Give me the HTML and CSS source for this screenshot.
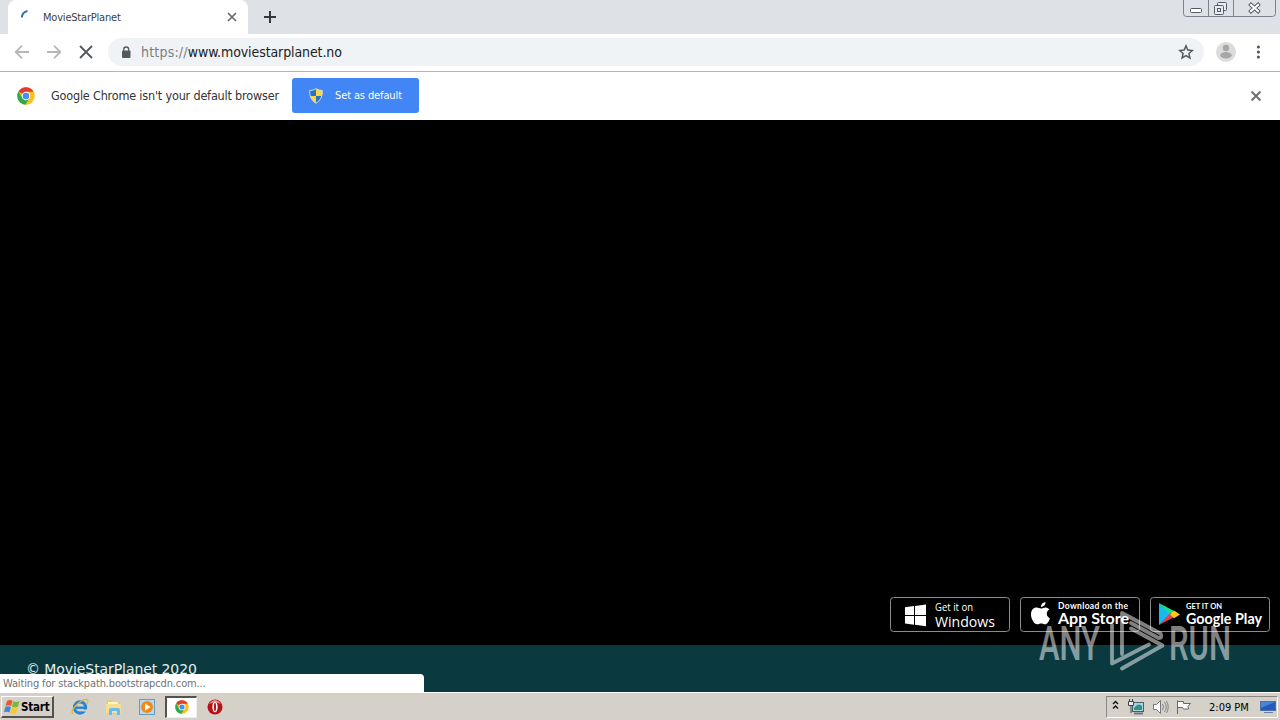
FILE: index.html
```html
<!DOCTYPE html>
<html lang="en">
<head>
  <meta charset="UTF-8">
  <title>MovieStarPlanet</title>
  <link rel="stylesheet" href="styles.css">
</head>
<body>
  <!-- shared logo -->
  <svg class="defs" width="0" height="0">
    <symbol id="chrome" viewBox="0 0 18 18">
      <circle cx="9" cy="9" r="8.7" fill="#fbc116"/>
      <path d="M9 9 1.5 4.6A8.7 8.7 0 0 1 16.6 4.8H9z" fill="#e33b2e"/>
      <path d="M1.5 4.6A8.7 8.7 0 0 0 8.3 17.7L12.6 11 9 9 5.4 11z" fill="#2da94f"/>
      <circle cx="9" cy="9" r="4.3" fill="#fff"/>
      <circle cx="9" cy="9" r="3.3" fill="#4a8af4"/>
    </symbol>
  </svg>

  <div class="tabstrip">
    <div class="tab">
      <svg class="spinner" width="16" height="16" viewBox="0 0 16 16"><path d="M1.900 8.500A7 7 0 0 1 7.500 2" fill="none" stroke="#3271c2" stroke-width="2"/></svg>
      <span class="tab-title">MovieStarPlanet</span>
      <svg width="10" height="10" viewBox="0 0 10 10"><path d="M1 1l8 8M9 1L1 9" stroke="#66696d" stroke-width="1.7"/></svg>
    </div>
    <svg class="new-tab" width="14" height="14" viewBox="0 0 14 14"><path d="M7 1v12M1 7h12" stroke="#34373b" stroke-width="2"/></svg>
    <div class="win-buttons">
      <svg width="96" height="17" viewBox="0 0 96 17">
        <path d="M.5 0V13.5Q.5 16.5 3.5 16.5H89.5Q92.5 16.5 92.5 13.5V0M25.500 0V16M50.500 0V16" fill="none" stroke="#7d828c"/>
        <rect x="7.500" y="8.500" width="11" height="4" rx="1" fill="#fff" stroke="#555a66"/>
        <g fill="#e8ebef" stroke="#555a66"><rect x="34.500" y="2.500" width="9" height="8" rx="1"/><rect x="31.500" y="5.500" width="9" height="9" rx="1"/><rect x="34.500" y="8.500" width="3" height="3"/></g>
        <path d="M66.500 3.500l10 9M76.500 3.500l-10 9" stroke="#555a66" stroke-width="4"/><path d="M67.200 4.200l8.600 7.600M75.800 4.200l-8.600 7.600" stroke="#fff" stroke-width="2.200"/>
      </svg>
    </div>
  </div>

  <div class="toolbar">
    <svg class="nav" width="16" height="16" viewBox="0 0 16 16"><path d="M15 8H2M8 1.700 1.700 8 8 14.300" fill="none" stroke="#b5b7ba" stroke-width="1.800"/></svg>
    <svg class="nav" width="16" height="16" viewBox="0 0 16 16"><path d="M1 8h13M8 1.700 14.300 8 8 14.300" fill="none" stroke="#b5b7ba" stroke-width="1.800"/></svg>
    <svg class="nav" width="16" height="16" viewBox="0 0 16 16"><path d="M2 2l12 12M14 2L2 14" stroke="#55585c" stroke-width="1.800"/></svg>
    <div class="omnibox">
      <svg width="10" height="13" viewBox="0 0 10 13"><rect x="1" y="4.500" width="8.500" height="7.500" rx="1" fill="#55595e"/><path d="M2.700 5V3.500a2.500 2.500 0 0 1 5 0V5" fill="none" stroke="#55595e" stroke-width="1.300"/></svg>
      <span class="url"><span class="scheme">https://</span>www.moviestarplanet.no</span>
      <svg class="star" width="16" height="16" viewBox="0 0 16 16"><path d="M8 1.900l1.800 4.200 4.500.4-3.400 3 1 4.400L8 11.600l-3.900 2.300 1-4.400-3.400-3 4.500-.4z" fill="none" stroke="#55595e" stroke-width="1.500"/></svg>
    </div>
    <svg class="avatar" width="20" height="20" viewBox="0 0 20 20"><circle cx="10" cy="10" r="10" fill="#dcdcdc"/><circle cx="10" cy="6" r="3.200" fill="#a7a7a7"/><ellipse cx="10" cy="13.300" rx="5.700" ry="3.200" fill="#a7a7a7"/></svg>
    <svg class="menu" width="4" height="14" viewBox="0 0 4 14"><g fill="#4c4f53"><circle cx="2.400" cy="2" r="1.500"/><circle cx="2.400" cy="7" r="1.500"/><circle cx="2.400" cy="12" r="1.500"/></g></svg>
  </div>

  <div class="infobar">
    <svg width="18" height="18"><use href="#chrome"/></svg>
    <span class="info-text">Google Chrome isn't your default browser</span>
    <div class="default-btn">
      <svg width="14" height="16" viewBox="0 0 14 16"><path d="M7 .7Q10 2.500 13.300 2.500 14 11 7 15.300 0 11 .7 2.500 4 2.500 7 .7z" fill="#ffd83b"/><path d="M7 .7V8H.6V2.500Q4 2.500 7 .7zM7 8h6.200Q12 12.500 7 15.300z" fill="#2872c9"/><path d="M7 .7Q10 2.500 13.300 2.500 14 11 7 15.300 0 11 .7 2.500 4 2.500 7 .7z" fill="none" stroke="#d3d9d0"/></svg>
      <span>Set as default</span>
    </div>
    <svg class="info-close" width="12" height="12" viewBox="0 0 12 12"><path d="M1.500 1.500l9 9M10.500 1.500l-9 9" stroke="#6c6f73" stroke-width="1.900"/></svg>
  </div>

  <div class="page">
    <div class="badges">
      <svg class="badge" width="120" height="35" viewBox="0 0 120 35">
        <rect x=".5" y=".5" width="119" height="34" rx="3"/>
        <path d="M15 10.200l9-1.200v9h-9zM25 8.900l11-1.500V18H25zM15 19h9v8.700l-9-1.200zM25 19h11v10.300l-11-1.500z" fill="#fff"/>
        <text class="segoe" x="45" y="14" font-size="10.500" textLength="38" lengthAdjust="spacingAndGlyphs">Get it on</text>
        <text class="segoe" x="45" y="29.500" font-size="14" textLength="60" lengthAdjust="spacingAndGlyphs">Windows</text>
      </svg>
      <svg class="badge" width="120" height="35" viewBox="0 0 120 35">
        <rect x=".5" y=".5" width="119" height="34" rx="3"/>
        <path d="M25.500 5q.3 3.800-4.500 5.200Q20.800 6 25.500 5zM21 11.600c1.500 0 2.800-1.100 4.500-1.100 1.600 0 3 .8 3.800 2-3.800 2.300-3 7.200.6 8.700-.8 3-2.800 6.100-4.700 6.100-1.500 0-2.200-.8-4-.8s-2.600.8-3.900.8c-3 0-6.300-5.300-6.300-9.800 0-4.300 2.600-6.900 5.600-6.900 1.800 0 3.100 1 4.400 1z" fill="#fff"/>
        <text class="lato bold" x="38" y="12" font-size="8.500" textLength="70">Download on the</text>
        <text class="lato bold" x="38" y="27" font-size="16" textLength="71" lengthAdjust="spacingAndGlyphs">App Store</text>
      </svg>
      <svg class="badge" width="120" height="35" viewBox="0 0 120 35">
        <rect x=".5" y=".5" width="119" height="34" rx="3"/>
        <path d="M9 6v22l12-11z" fill="#16baf1"/><path d="M9 6l16 8.500-4.500 4z" fill="#16df92"/><path d="M9 28l16-8.500-4.500-4z" fill="#ee3d50"/><path d="M24 13.500l6 4-6 3.700-4-3.700z" fill="#ffc71b"/>
        <text class="lato bold" x="36" y="12" font-size="8" textLength="36" lengthAdjust="spacingAndGlyphs">GET IT ON</text>
        <text class="lato bold" x="36" y="27" font-size="15" textLength="76" lengthAdjust="spacingAndGlyphs">Google Play</text>
      </svg>
    </div>
  </div>
  <div class="page-footer">
    <div class="copyright">© MovieStarPlanet 2020</div>
    <div class="status"><span>Waiting for stackpath.bootstrapcdn.com...</span></div>
  </div>

  <div class="taskbar">
    <div class="start">
      <svg width="17" height="16" viewBox="0 0 17 16"><path d="M3 2q3-2 5.500-.2L7.200 7Q4.500 5.500 1.500 7z" fill="#e85b25"/><path d="M9.200 2.300q3 1.700 6.300-.2L14 7.500q-3 1.700-6 0z" fill="#79b83c"/><path d="M1.200 8q3-1.500 5.700.1L5.500 13.500Q3 12 0 13.300z" fill="#3e8ad5"/><path d="M7.700 8.500q3 1.600 6 0L12.300 14q-3 1.800-6 0z" fill="#f8c92b"/></svg>
      <span>Start</span>
    </div>
    <svg class="quick" width="18" height="18" viewBox="0 0 18 18"><circle cx="9" cy="9.500" r="5.600" fill="none" stroke="#2685d8" stroke-width="3.200"/><path d="M5 9.700h10" stroke="#2685d8" stroke-width="2.400"/><path d="M11 11.500h6v2h-6z" fill="#d5d0c8"/><path d="M2 16Q-1 13 6 6.500 14-.5 16.500 2q1 1.200-.7 4" fill="none" stroke="#e5b82e" stroke-width="1.300"/></svg>
    <svg class="quick" width="18" height="18" viewBox="0 0 18 18"><path d="M2 2h5l1 2h7v12H2z" fill="#edc967"/><path d="M3 4h10v4H3z" fill="#fff5c4"/><path d="M1 6h15v9H1z" fill="#f5df91"/><path d="M4 17v-5q0-2 2-2h7q2 0 2 2v5h-3v-4H7v4z" fill="#69bce9"/></svg>
    <svg class="quick" width="18" height="18" viewBox="0 0 18 18"><rect x="1.500" y="1.500" width="15" height="15" fill="#b8d8f0" stroke="#679bc7"/><circle cx="9" cy="9" r="6" fill="#f28b16"/><path d="M7 5.500v7L12.500 9z" fill="#fff"/></svg>
    <div class="task-active"><svg width="14" height="14"><use href="#chrome"/></svg></div>
    <svg class="opera" width="16" height="16" viewBox="0 0 16 16"><circle cx="8" cy="8" r="7.500" fill="#b81218"/><path d="M2 5Q8-3 14 5 8 2 2 5z" fill="#e78581"/><ellipse cx="8" cy="8" rx="2.700" ry="5.200" fill="#fff"/><ellipse cx="8" cy="8" rx="1" ry="4.200" fill="#b81218"/></svg>
    <div class="tray">
      <svg class="chevrons" width="7" height="10" viewBox="0 0 7 10"><path d="M1 4l2.500-2.500L6 4M1 8.500L3.500 6 6 8.500" fill="none" stroke="#111" stroke-width="1.400"/></svg>
      <svg class="network" width="16" height="16" viewBox="0 0 16 16"><rect x="4.500" y="3.500" width="11" height="9" fill="#a5d5dd" stroke="#496069"/><path d="M6 9q4-6 8-2v4H6z" fill="#358f86"/><path d="M6 14.500h9" stroke="#70777a" stroke-width="2"/><path d="M.5 2.500h5v4h-5zM1.500 0v2M4.500 0v2M3 7v7" fill="#eee" stroke="#444"/></svg>
      <svg class="speaker" width="17" height="16" viewBox="0 0 17 16"><path d="M1.500 5.500h3l4-4v13l-4-4h-3z" fill="#fff" stroke="#777"/><path d="M10.500 5q2 3 0 6M12.500 3q3.500 5 0 10M14.500 2q3.500 6 0 12" fill="none" stroke="#888"/></svg>
      <svg class="flag" width="17" height="16" viewBox="0 0 17 16"><path d="M2.500 15V1.500M2.500 2.500h6v2h7l-2.500 3 .5 2.500h-5l-1-1.500h-5" fill="#fff" stroke="#666"/></svg>
      <span class="clock">2:09 PM</span>
      <svg class="desktop" width="16" height="14" viewBox="0 0 16 14"><rect x=".5" y="1.500" width="15" height="9" fill="#2459bd" stroke="#51729f"/><path d="M1 2h14L1 8z" fill="#4a83de"/><path d="M4 12.500h9" stroke="#6682aa"/></svg>
    </div>
  </div>

  <svg class="watermark" width="194" height="64" viewBox="0 0 194 64">
    <text x="1" y="51" textLength="61" lengthAdjust="spacingAndGlyphs">ANY</text>
    <text x="131" y="51" textLength="62" lengthAdjust="spacingAndGlyphs">RUN</text>
    <g fill="none" stroke="#fff" stroke-width="3.800" stroke-linecap="round" stroke-linejoin="round">
      <path d="M84 45V4L122.500 24.500Q125 29 120.500 29L93 14M74 16V54.500L111 35.500M93 19.500L124.500 36.500 84 59.500"/>
    </g>
  </svg>
</body>
</html>
```
FILE: styles.css
```css
body {
  margin: 0;
  width: 1280px;
  height: 720px;
  overflow: hidden;
  position: relative;
  font-family: "DejaVu Sans Condensed", "DejaVu Sans", sans-serif;
  background: #000;
}
svg {
  display: block;
  flex: none;
}
.defs {
  position: absolute;
}
.tabstrip {
  display: flex;
  height: 34px;
  background: #dee1e6;
  padding-left: 8px;
}
.tab {
  display: flex;
  align-items: center;
  box-sizing: border-box;
  width: 240px;
  padding: 0 11px 0 12px;
  background: #fff;
  border-radius: 8px 8px 0 0;
}
.tab-title {
  flex: 1;
  margin-left: 7px;
  font-size: 11px;
  letter-spacing: -0.2px;
  color: #3c4043;
}
.new-tab {
  margin: 10px 0 0 15px;
}
.win-buttons {
  margin-left: auto;
  margin-right: 1px;
}
.toolbar {
  display: flex;
  align-items: center;
  box-sizing: border-box;
  height: 38px;
  padding: 0 20px 1px 14px;
  background: #fff;
  border-bottom: 1px solid #b3b5b8;
}
.nav {
  margin-right: 16px;
}
.omnibox {
  display: flex;
  align-items: center;
  flex: 1;
  height: 28px;
  margin-left: -2px;
  padding: 0 10px 0 13px;
  border-radius: 14px;
  background: #f0f3f5;
}
.url {
  margin-left: 10px;
  font-size: 14px;
  letter-spacing: -0.1px;
  color: #202124;
}
.scheme {
  letter-spacing: 0.2px;
  color: #7b7f83;
}
.star {
  margin-left: auto;
}
.avatar {
  margin-left: 12px;
}
.menu {
  margin-left: 20px;
}
.infobar {
  display: flex;
  align-items: center;
  box-sizing: border-box;
  height: 48px;
  padding: 0 18px 1px 17px;
  background: #fff;
}
.info-text {
  width: 241px;
  margin-left: 16px;
  font-size: 12.5px;
  letter-spacing: -0.18px;
  white-space: nowrap;
  color: #333;
}
.default-btn {
  display: flex;
  align-items: center;
  box-sizing: border-box;
  width: 127px;
  height: 35px;
  padding-left: 17px;
  border-radius: 3px;
  background: #4285f4;
  color: #fff;
  font-size: 11px;
  letter-spacing: -0.12px;
  gap: 12px;
}
.info-close {
  margin-left: auto;
}
.page {
  display: flex;
  align-items: flex-end;
  justify-content: flex-end;
  box-sizing: border-box;
  height: 525px;
  padding: 0 10px 13px 0;
  background: #000;
}
.badges {
  display: flex;
  gap: 10px;
}
.badge rect {
  fill: #000;
  stroke: #8c8c8c;
}
.badge text {
  fill: #fff;
}
.segoe {
  font-family: "Open Sans", sans-serif;
}
.lato {
  font-family: Lato, sans-serif;
}
.bold {
  font-weight: 700;
}
.page-footer {
  height: 47px;
  background: #0a3a40;
  overflow: hidden;
}
.copyright {
  height: 29px;
  padding-left: 26px;
  box-sizing: border-box;
  padding-top: 15px;
  line-height: 18px;
  font-family: "DejaVu Sans", sans-serif;
  font-size: 14px;
  letter-spacing: -0.08px;
  color: #e8eeee;
}
.status {
  position: relative;
  box-sizing: border-box;
  width: 424px;
  height: 18px;
  padding: 1px 0 0 3px;
  border-radius: 0 4px 0 0;
  background: #fff;
  font-size: 11px;
  letter-spacing: -0.14px;
  line-height: 18px;
  color: #737373;
}
.taskbar {
  display: flex;
  align-items: center;
  box-sizing: border-box;
  height: 28px;
  padding: 0 2px 0 1px;
  background: #d5d0c8;
  border-top: 1px solid #fff;
}
.start {
  display: flex;
  align-items: center;
  box-sizing: border-box;
  width: 53px;
  height: 22px;
  padding: 1px 0 0 2px;
  border: 1px solid #fff;
  border-right: 2px solid #55524e;
  border-bottom: 2px solid #55524e;
  font-size: 11.5px;
  letter-spacing: -0.2px;
  font-weight: 700;
}
.quick {
  margin-left: 15.5px;
}
.start + .quick {
  margin-left: 17px;
}
.task-active {
  display: flex;
  align-items: center;
  justify-content: center;
  box-sizing: border-box;
  width: 32px;
  height: 22px;
  margin-left: 9px;
  background: #fff;
  border: 2px solid #55524e;
  border-right: 1px solid #eee;
  border-bottom: 1px solid #eee;
}
.opera {
  margin-left: 9.5px;
}
.tray {
  display: flex;
  align-items: center;
  box-sizing: border-box;
  width: 172px;
  height: 22px;
  margin-left: auto;
  padding-left: 5px;
  border: 1px solid #8b8782;
  border-right-color: #fff;
  border-bottom-color: #fff;
}
.chevrons {
  margin-bottom: 3px;
}
.network {
  margin-left: 9px;
}
.speaker {
  margin-left: 8px;
}
.flag {
  margin-left: 6px;
}
.clock {
  width: 40px;
  margin-left: 17px;
  padding-top: 1px;
  font-size: 11px;
  white-space: nowrap;
}
.desktop {
  margin-left: 11px;
}
.watermark {
  position: absolute;
  left: 1038px;
  top: 609px;
  overflow: visible;
  opacity: 0.5;
}
.watermark text {
  font-family: Roboto, sans-serif;
  font-size: 49px;
  font-weight: 500;
  fill: #fff;
}
```
